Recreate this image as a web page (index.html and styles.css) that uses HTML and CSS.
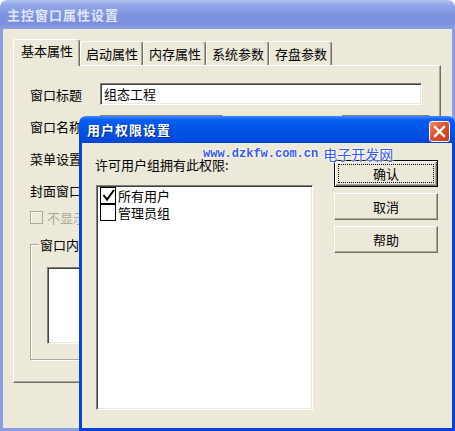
FILE: index.html
```html
<!DOCTYPE html>
<html lang="zh-CN">
<head>
    <meta charset="UTF-8">
    <title>主控窗口属性设置</title>
    <link rel="stylesheet" href="styles.css">
</head>
<body>
    <!-- Main property window (inactive) -->
    <div class="main">
        <div class="titlebar inactive">
            <span class="title">主控窗口属性设置</span>
        </div>
        <div class="win-body">
            <div class="tabs">
                <div class="tab active">基本属性</div>
                <div class="tab">启动属性</div>
                <div class="tab">内存属性</div>
                <div class="tab">系统参数</div>
                <div class="tab">存盘参数</div>
            </div>
            <div class="tab-panel">
                <div class="row">
                    <span class="label">窗口标题</span>
                    <div class="field">组态工程</div>
                </div>
                <div class="row">
                    <span class="label">窗口名称</span>
                    <div class="field short"></div>
                    <div class="field combo"></div>
                </div>
                <div class="row">
                    <span class="label">菜单设置</span>
                    <div class="field short"></div>
                </div>
                <div class="row">
                    <span class="label">封面窗口</span>
                    <div class="field short"></div>
                </div>
                <div class="check disabled">
                    <span class="box"></span>
                    <span>不显示标题栏</span>
                </div>
                <div class="group">
                    <span class="legend">窗口内容注释</span>
                    <div class="memo"></div>
                </div>
            </div>
        </div>
    </div>

    <!-- User permission dialog (active) -->
    <div class="dialog">
        <div class="titlebar active">
            <span class="title">用户权限设置</span>
            <div class="close">
                <svg width="13" height="13" viewBox="0 0 13 13">
                    <path d="M2 2 L11 11 M11 2 L2 11" stroke="#fff" stroke-width="2.4" stroke-linecap="square"/>
                </svg>
            </div>
        </div>
        <div class="dlg-body">
            <div class="left-col">
                <div class="hint">许可用户组拥有此权限:</div>
                <div class="listbox">
                    <div class="item">
                        <span class="cbox">
                            <svg width="13" height="14" viewBox="0 0 13 14">
                                <polyline points="1.5,7 5,11.5 12,2" fill="none" stroke="#000" stroke-width="2"/>
                            </svg>
                        </span>
                        <span>所有用户</span>
                    </div>
                    <div class="item">
                        <span class="cbox"></span>
                        <span>管理员组</span>
                    </div>
                </div>
            </div>
            <div class="buttons">
                <div class="btn default"><span class="focus">确认</span></div>
                <div class="btn">取消</div>
                <div class="btn">帮助</div>
            </div>
        </div>
    </div>

    <!-- Watermark over the screenshot -->
    <div class="watermark">
        <span class="url">www.dzkfw.com.cn</span>
        <span class="site">电子开发网</span>
    </div>
</body>
</html>
```

FILE: styles.css
```css
* {
    box-sizing: border-box;
}

body {
    margin: 0;
    width: 455px;
    height: 431px;
    overflow: hidden;
    position: relative;
    background: #fff;
    font-family: "Noto Sans CJK SC", sans-serif;
    font-size: 13px;
    color: #000;
}

/* Title bars */
.titlebar {
    display: flex;
    align-items: center;
    border-radius: 7px 7px 0 0;
}

.titlebar .title {
    font-weight: bold;
    font-size: 13px;
    letter-spacing: 1px;
    line-height: 15px;
}

.titlebar.inactive {
    height: 29px;
    padding-left: 7px;
    background: linear-gradient(#b3c4f1 0%, #91a7e8 18%, #7d93df 55%, #7a90de 80%, #8da1e4 100%);
}

.titlebar.inactive .title {
    color: #dfe6f8;
}

.titlebar.active {
    height: 27px;
    padding-left: 8px;
    background: linear-gradient(#3d8bff 0%, #0a5ff2 14%, #0055e5 45%, #004fe0 75%, #0045d2 100%);
}

.titlebar.active .title {
    color: #fff;
    text-shadow: 1px 1px #0b2c8c;
}

/* Main window */
.main {
    width: 455px;
    height: 431px;
    display: flex;
    flex-direction: column;
}

.win-body {
    flex: 1;
    background: #ece9d8;
    border: 3px solid #8a9de2;
    border-top: 0;
    padding: 10px 11px 0 10px;
}

/* Tabs */
.tabs {
    display: flex;
    align-items: flex-end;
    height: 26px;
    position: relative;
    z-index: 1;
}

.tab {
    height: 24px;
    padding: 0 4px 0 5px;
    line-height: 23px;
    background: #ece9d8;
    border-top: 1px solid #fff;
    border-left: 1px solid #fff;
    border-right: 1px solid #716f64;
    box-shadow: inset -1px 0 #aca899;
    border-radius: 3px 3px 0 0;
    white-space: nowrap;
}

.tab.active {
    height: 27px;
    margin-bottom: -1px;
    padding: 0 6px 0 7px;
    line-height: 22px;
}

.tab-panel {
    width: 428px;
    height: 318px;
    background: #ece9d8;
    border-top: 1px solid #fff;
    border-left: 1px solid #fff;
    border-right: 1px solid #716f64;
    border-bottom: 1px solid #716f64;
    box-shadow: inset -1px -1px #aca899;
    padding: 17px 0 0 16px;
}

.row {
    display: flex;
    align-items: center;
    height: 22px;
    margin-bottom: 10px;
}

.label {
    width: 70px;
    line-height: 15px;
}

.field {
    width: 322px;
    height: 22px;
    background: #fff;
    border: 1px solid;
    border-color: #808080 #fff #fff #808080;
    box-shadow: inset 1px 1px #404040, inset -1px -1px #ece9d8;
    padding: 2px 0 0 3px;
    line-height: 16px;
}

.field.short {
    width: 123px;
}

.field.combo {
    width: 88px;
    margin-left: 119px;
}

/* Disabled checkbox */
.check {
    display: flex;
    align-items: center;
    gap: 4px;
    margin-top: 3px;
    height: 13px;
    line-height: 15px;
}

.check .box {
    width: 13px;
    height: 13px;
    border: 1px solid #aca899;
    background: #ece9d8;
    box-shadow: inset 1px 1px #fff;
}

.check.disabled {
    color: #aca899;
}

/* Group box */
.group {
    position: relative;
    margin-top: 20px;
    width: 394px;
    height: 116px;
    border: 1px solid #aca899;
    box-shadow: inset 1px 1px #fff, 1px 1px #fff;
    padding: 22px 0 0 16px;
}

.group .legend {
    position: absolute;
    left: 8px;
    top: -8px;
    padding: 0 1px;
    background: #ece9d8;
    line-height: 15px;
}

.memo {
    width: 360px;
    height: 77px;
    background: #fff;
    border: 1px solid;
    border-color: #808080 #fff #fff #808080;
    box-shadow: inset 1px 1px #404040, inset -1px -1px #ece9d8;
}

/* Dialog */
.dialog {
    position: absolute;
    left: 79px;
    top: 116px;
    width: 376px;
    height: 315px;
    display: flex;
    flex-direction: column;
}

.close {
    margin-left: auto;
    margin-right: 5px;
    align-self: flex-start;
    margin-top: 5px;
    width: 21px;
    height: 21px;
    border: 1px solid #fff;
    border-radius: 3px;
    background: linear-gradient(135deg, #f08a6a 0%, #e0502c 45%, #c83c17 100%);
    display: flex;
    align-items: center;
    justify-content: center;
}

.close svg {
    display: block;
}

.dlg-body {
    flex: 1;
    background: #ece9d8;
    border: 3px solid #0842d8;
    border-top: 0;
    display: flex;
    gap: 21px;
    padding: 14px 14px 0 14px;
}

.hint {
    line-height: 15px;
    margin-bottom: 13px;
    margin-left: -1px;
    white-space: nowrap;
}

.listbox {
    width: 217px;
    height: 225px;
    background: #fff;
    border: 1px solid;
    border-color: #808080 #fff #fff #808080;
    box-shadow: inset 1px 1px #404040, inset -1px -1px #ece9d8;
    padding: 1px 0 0 3px;
}

.item {
    display: flex;
    align-items: center;
    height: 17px;
    gap: 2px;
    line-height: 15px;
}

.cbox {
    width: 16px;
    height: 17px;
    border: 1px solid #000;
    background: #fff;
    display: flex;
    align-items: flex-start;
    justify-content: center;
}

/* Buttons */
.buttons {
    display: flex;
    flex-direction: column;
    gap: 6px;
    margin-top: 3px;
}

.btn {
    width: 104px;
    height: 27px;
    background: #ece9d8;
    border: 1px solid;
    border-color: #fff #716f64 #716f64 #fff;
    box-shadow: inset -1px -1px #aca899;
    display: flex;
    align-items: center;
    justify-content: center;
    line-height: 15px;
}

.btn.default {
    border-color: #000;
    box-shadow: inset 1px 1px #fff, inset -1px -1px #716f64, inset -2px -2px #aca899;
    padding: 3px;
}

.btn .focus {
    flex: 1;
    align-self: stretch;
    border: 1px dotted #000;
    display: flex;
    align-items: center;
    justify-content: center;
}

/* Watermark */
.watermark {
    position: absolute;
    left: 203px;
    top: 146px;
    display: flex;
    align-items: center;
    gap: 5px;
    color: #3558f0;
    text-shadow: 0 0 2px #fff, 0 0 2px #fff, 0 0 3px #fff;
    white-space: nowrap;
}

.watermark .url {
    font-family: "Liberation Mono", monospace;
    font-weight: bold;
    font-size: 12px;
    line-height: 16px;
}

.watermark .site {
    font-size: 14px;
    line-height: 16px;
}
```
